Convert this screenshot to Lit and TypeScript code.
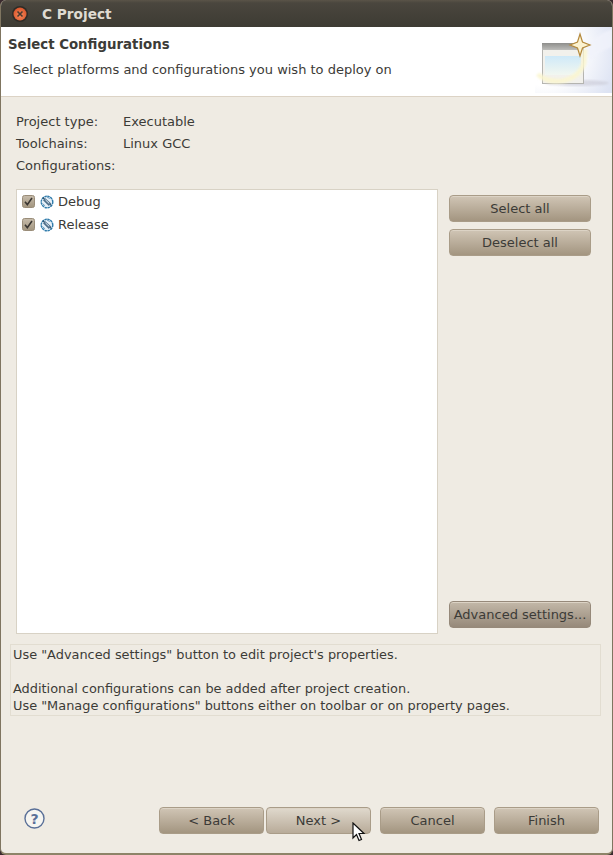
import { LitElement, html, css, svg } from "lit";
import { customElement } from "lit/decorators.js";

const configIcon = svg`<svg class="cfg" width="14" height="14" viewBox="0 0 14 14">
  <circle cx="7" cy="7" r="5.8" fill="#e6f0f8" stroke="#2f7bab" stroke-width="1.4" stroke-dasharray="2.4 0.6"/>
  <path d="M2.8 2.6 L11.2 10.4" stroke="#24465f" stroke-width="1.2" fill="none"/>
  <path d="M5 3 L11.2 8.6 L8.8 11 L3 5.2 Z" fill="#4f6f8a"/>
  <path d="M5.4 4.8 L9.2 8.4" stroke="#e3edf5" stroke-width="1" fill="none"/>
  <path d="M2.5 8.5 L5 10.8 M7 2 L9.8 3.6" stroke="#5f93b8" stroke-width="0.9" fill="none"/>
</svg>`;

const check = svg`<svg class="chk" width="13" height="13" viewBox="0 0 13 13">
  <defs><linearGradient id="cb" x1="0" y1="0" x2="0" y2="1"><stop offset="0" stop-color="#c7bcab"/><stop offset="1" stop-color="#a2957f"/></linearGradient></defs>
  <rect x="0.5" y="0.5" width="12" height="12" rx="2" fill="url(#cb)" stroke="#9a8d79"/>
  <path d="M3 6.8 L5.3 9.6 L10 3" fill="none" stroke="#3a3632" stroke-width="1.6"/>
</svg>`;

@customElement("app-root")
export class AppRoot extends LitElement {
  static styles = css`
    :host {
      display: block;
      width: 613px;
      height: 855px;
      background: #3a2a2e;
      font-family: "DejaVu Sans", sans-serif;
      font-size: 13px;
      color: #3c3b37;
      overflow: hidden;
      position: relative;
    }
    .window {
      height: 855px;
      box-sizing: border-box;
      display: flex;
      flex-direction: column;
      background: #efebe3;
      border-left: 1px solid #7f7560;
      border-right: 1px solid #7f7560;
      border-bottom: 2px solid #8d8468;
      border-radius: 6px;
      overflow: hidden;
    }
    .titlebar {
      height: 27px;
      flex: none;
      display: flex;
      align-items: center;
      gap: 13px;
      padding-left: 11px;
      background: linear-gradient(#5a5448 0, #4a463e 3px, #3d3b33 100%);
      color: #dfdbd2;
      font-weight: bold;
      font-size: 13.7px;
    }
    .titlebar span {
      margin-left: 1px;
    }
    .close {
      width: 16px;
      height: 16px;
      flex: none;
    }
    .header {
      height: 70px;
      flex: none;
      box-sizing: border-box;
      background: #fff;
      border-bottom: 1px solid #dcd3c5;
      display: flex;
      justify-content: space-between;
    }
    .header-text {
      display: flex;
      flex-direction: column;
    }
    .header h1 {
      margin: 9px 0 0 7px;
      font-size: 13.33px;
      line-height: 17px;
      font-weight: bold;
      color: #3c3b37;
    }
    .header p {
      margin: 8px 0 0 12px;
      line-height: 17px;
    }
    .banner {
      width: 77px;
      height: 66px;
      flex: none;
    }
    .content {
      flex: 1;
      display: flex;
      flex-direction: column;
      min-height: 0;
    }
    .meta {
      display: grid;
      grid-template-columns: 107px 1fr;
      grid-auto-rows: 22px;
      padding: 14px 0 0 15px;
      line-height: 22px;
    }
    .main {
      display: flex;
      margin: 12px 0 0 15px;
      gap: 11px;
      height: 445px;
    }
    .list {
      width: 422px;
      box-sizing: border-box;
      background: #fff;
      border: 1px solid #d8d2c5;
      padding: 0 0 0 5px;
    }
    .row {
      height: 23px;
      display: flex;
      align-items: center;
      gap: 5px;
    }
    .row span {
      margin-left: -1px;
    }
    .side {
      width: 142px;
      display: flex;
      flex-direction: column;
      gap: 7px;
      padding: 6px 0;
      box-sizing: border-box;
    }
    .spacer {
      flex: 1;
    }
    .btn {
      height: 27px;
      box-sizing: border-box;
      border: 1px solid #a99c88;
      border-radius: 4px;
      background: linear-gradient(#d0c5b5, #a39580);
      display: flex;
      align-items: center;
      justify-content: center;
      white-space: nowrap;
      color: #3c3b37;
      box-shadow: inset 0 1px 0 #dcd3c5;
    }
    .btn.dark {
      background: linear-gradient(#c3b8a8, #96897a);
      border-color: #96897a;
    }
    .btn.hover {
      background: linear-gradient(#e0d9cd, #b8ab99);
    }
    .info {
      margin: 10px 11px 0 9px;
      height: 72px;
      box-sizing: border-box;
      border: 1px solid #e2ddd1;
      padding: 1px 0 0 2px;
      line-height: 17px;
      white-space: pre-line;
      font-size: 12.9px;
    }
    .footer {
      margin-top: auto;
      height: 46px;
      flex: none;
      display: flex;
      align-items: flex-start;
      padding-left: 23px;
    }
    .help {
      width: 21px;
      height: 21px;
      flex: none;
      margin-top: 1px;
    }
    .actions {
      margin-left: auto;
      margin-right: 13px;
      display: flex;
    }
    .actions .btn {
      width: 105px;
      margin-left: 9px;
    }
    .actions .btn:nth-child(2) {
      margin-left: 2px;
    }
    .cursor {
      position: absolute;
      left: 352px;
      top: 822px;
      width: 14px;
      height: 22px;
    }
    .cfg, .chk {
      flex: none;
    }
  `;

  render() {
    return html`
      <div class="window">
        <div class="titlebar">
          <svg class="close" viewBox="0 0 16 16">
            <defs>
              <radialGradient id="cl" cx="0.5" cy="0.6" r="0.6">
                <stop offset="0" stop-color="#f58a5c"/><stop offset="1" stop-color="#d9542a"/>
              </radialGradient>
            </defs>
            <circle cx="8" cy="8" r="8" fill="#2e2c27"/>
            <circle cx="8" cy="8" r="6.5" fill="url(#cl)"/>
            <path d="M5.5 5.5 L10.5 10.5 M10.5 5.5 L5.5 10.5" stroke="#4a3a30" stroke-width="1.6"/>
          </svg>
          <span>C Project</span>
        </div>
        <div class="header">
          <div class="header-text">
            <h1>Select Configurations</h1>
            <p>Select platforms and configurations you wish to deploy on</p>
          </div>
          <svg class="banner" viewBox="0 0 77 66">
            <defs>
              <radialGradient id="bg" gradientUnits="userSpaceOnUse" cx="8" cy="24" r="76">
                <stop offset="0.45" stop-color="#ffffff"/><stop offset="1" stop-color="#dde3f3"/>
              </radialGradient>
              <linearGradient id="sky" x1="0" y1="0" x2="0" y2="1">
                <stop offset="0" stop-color="#cfe9f8"/><stop offset="1" stop-color="#f2f7f0"/>
              </linearGradient>
              <linearGradient id="tb" x1="0" y1="0" x2="0" y2="1">
                <stop offset="0" stop-color="#8e8e8c"/><stop offset="1" stop-color="#bdbdba"/>
              </linearGradient>
              <filter id="soft"><feGaussianBlur stdDeviation="1"/></filter>
            </defs>
            <rect width="77" height="66" fill="url(#bg)"/>
            <path d="M50 20 C60 10 68 6 77 2 V20 C66 24 60 28 56 34 Z" fill="#f1f3fb" opacity="0.8" filter="url(#soft)"/>
            <ellipse cx="42" cy="56" rx="32" ry="3" fill="#c8c8d4" opacity="0.6" filter="url(#soft)"/>
            <rect x="7.5" y="16.5" width="41" height="40" fill="#f2f1ec" stroke="#b4b4b0"/>
            <rect x="7" y="16" width="42" height="7" fill="url(#tb)"/>
            <rect x="10" y="29" width="36" height="19" fill="url(#sky)"/>
            <path d="M3 47 C12 58 42 58 49 36 L50 22" fill="none" stroke="#fbf6cf" stroke-width="5" opacity="0.85" filter="url(#soft)"/>
            <path d="M45 7 L47.5 15 L55 18 L47.5 21 L45 29 L42.5 21 L35 18 L42.5 15 Z" fill="#fbf2d0" stroke="#b4893c" stroke-width="1.2"/>
          </svg>
        </div>
        <div class="content">
          <div class="meta">
            <div>Project type:</div><div>Executable</div>
            <div>Toolchains:</div><div>Linux GCC</div>
            <div>Configurations:</div><div></div>
          </div>
          <div class="main">
            <div class="list">
              <div class="row">${check}${configIcon}<span>Debug</span></div>
              <div class="row">${check}${configIcon}<span>Release</span></div>
            </div>
            <div class="side">
              <div class="btn">Select all</div>
              <div class="btn">Deselect all</div>
              <div class="spacer"></div>
              <div class="btn dark">Advanced settings...</div>
            </div>
          </div>
          <div class="info">Use "Advanced settings" button to edit project's properties.

Additional configurations can be added after project creation.
Use "Manage configurations" buttons either on toolbar or on property pages.</div>
          <div class="footer">
            <svg class="help" viewBox="0 0 21 21">
              <circle cx="10.5" cy="10.5" r="9.5" fill="#f6f5f1" stroke="#5a7098" stroke-width="1.4"/>
              <text x="10.5" y="15.5" text-anchor="middle" font-size="14" font-weight="bold" font-family="DejaVu Sans" fill="#5a7098">?</text>
            </svg>
            <div class="actions">
              <div class="btn">&lt; Back</div>
              <div class="btn hover">Next &gt;</div>
              <div class="btn">Cancel</div>
              <div class="btn">Finish</div>
            </div>
          </div>
        </div>
      </div>
      <svg class="cursor" viewBox="0 0 14 22">
        <path d="M1 1 L1 16 L4.5 12.5 L7 18.5 L9.5 17.5 L7 11.5 L12 11.5 Z" fill="#fff" stroke="#111" stroke-width="1.2"/>
      </svg>
    `;
  }
}
